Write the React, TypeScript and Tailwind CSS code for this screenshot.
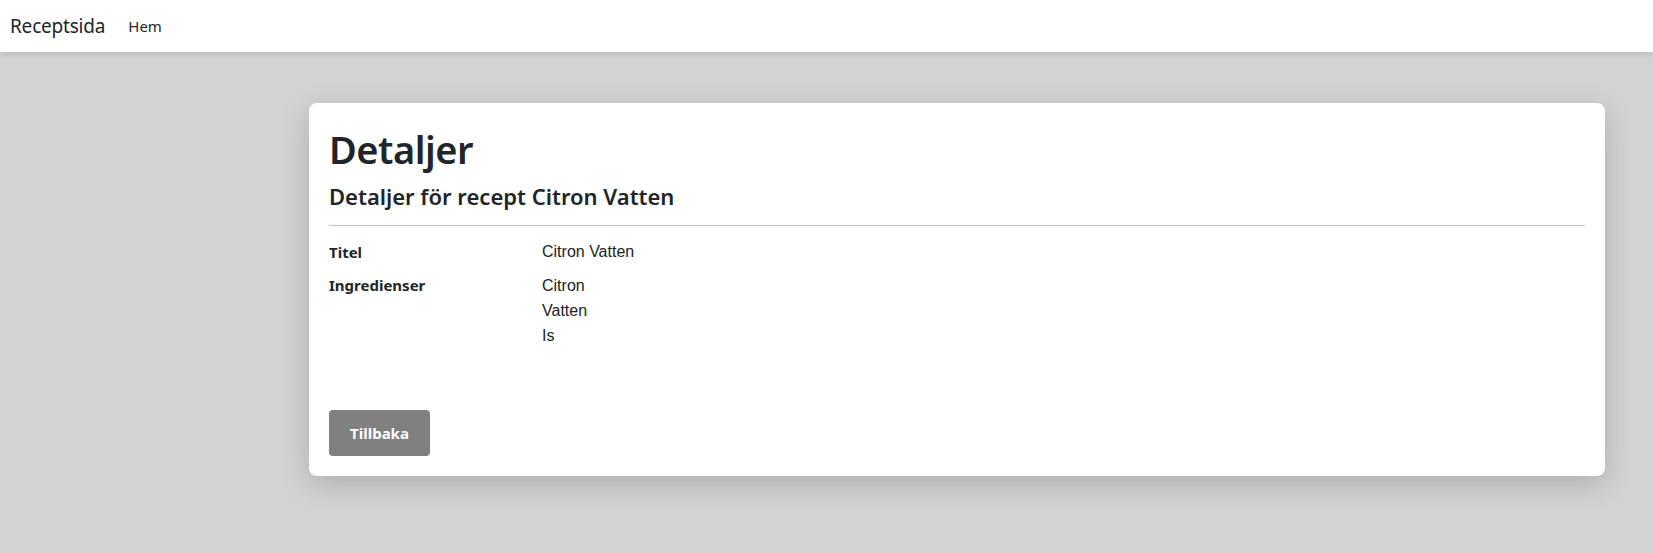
import React from "react";

export default function App() {
  const sans = { fontFamily: '"Segoe UI", "Noto Sans", "Liberation Sans", sans-serif' };
  const arial = { fontFamily: '"Liberation Sans", Arial, sans-serif' };
  return (
    <div className="min-h-screen bg-[#d3d3d3] text-[#212529]" style={sans}>
      <nav className="h-[52px] bg-white flex items-center px-[10px] shadow-[0_2px_6px_rgba(0,0,0,0.12)] relative">
        <span className="text-[19px] tracking-[-0.2px] leading-none">Receptsida</span>
        <a className="ml-[23px] text-[15px] leading-none">Hem</a>
      </nav>
      <div className="pt-[51px] pl-[309px] pr-[48px]">
        <div className="bg-white rounded-[8px] shadow-[0_8px_30px_rgba(0,0,0,0.18)] px-[20px] pt-[22px] pb-[20px]">
          <h1 className="text-[38px] tracking-[-0.5px] font-semibold leading-[48px]">Detaljer</h1>
          <h4 className="text-[22px] font-semibold leading-[29px] mt-[9px]">Detaljer för recept Citron Vatten</h4>
          <hr className="mt-[14px] border-0 border-t border-[#c4c4c4]" />
          <dl className="grid grid-cols-[213px_1fr] mt-[14px] text-[15px]">
            <dt className="font-bold leading-[24px]">Titel</dt>
            <dd className="leading-[24px] text-[16px] text-[#222]" style={arial}>Citron Vatten</dd>
            <dt className="font-bold leading-[24px] mt-[9px]">Ingredienser</dt>
            <dd className="mt-[9px] text-[16px] text-[#222]" style={arial}>
              <div className="leading-[25px]">Citron</div>
              <div className="leading-[25px]">Vatten</div>
              <div className="leading-[25px]">Is</div>
            </dd>
          </dl>
          <button className="mt-[62px] h-[46px] w-[101px] rounded-[4px] bg-[#808080] text-white font-bold text-[15px]">Tillbaka</button>
        </div>
      </div>
    </div>
  );
}
